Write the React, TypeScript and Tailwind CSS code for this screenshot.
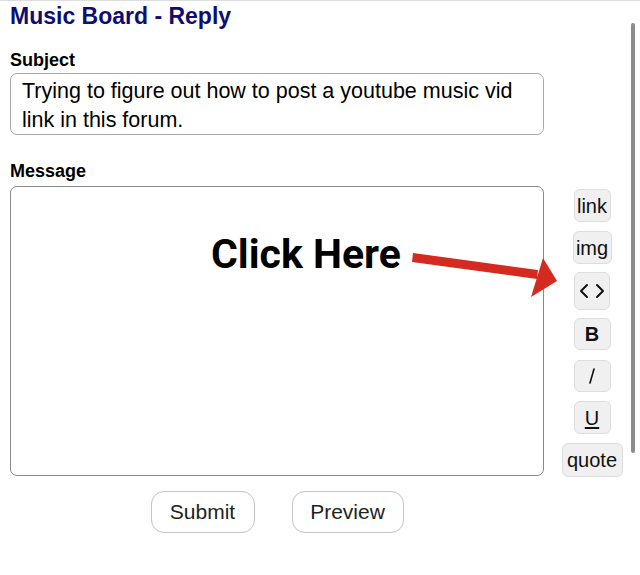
import React from "react";

const sideButtons = [
  { label: "link", className: "mt-0 h-[33px] w-[37px]" },
  { label: "img", className: "mt-[9px] h-[33px] w-[39px]" },
  { label: "<>", className: "mt-[8px] h-[38px] w-[36px] bg-[#e7e7e7]" },
  { label: "B", className: "mt-[8px] h-[32px] w-[37px] font-bold" },
  { label: "I", className: "mt-[10px] h-[32px] w-[37px]" },
  { label: "U", className: "mt-[9px] h-[33px] w-[37px] underline underline-offset-2" },
  { label: "quote", className: "mt-[9px] h-[34px] w-[61px]" },
];

function CodeGlyph() {
  return (
    <svg width="26" height="16" viewBox="0 0 26 16" fill="none" stroke="#111" strokeWidth="2" strokeLinecap="round" strokeLinejoin="round">
      <path d="M8 2 L2 8 L8 14" />
      <path d="M18 2 L24 8 L18 14" />
    </svg>
  );
}

function ItalicGlyph() {
  return (
    <svg width="10" height="18" viewBox="0 0 10 18" fill="none" stroke="#111" strokeWidth="1.6" strokeLinecap="round">
      <path d="M7 2 L3 16" />
    </svg>
  );
}

export default function App() {
  return (
    <div className="relative h-[575px] w-[640px] overflow-hidden border-t border-[#dedede] bg-white font-['Liberation_Sans',Arial,sans-serif] text-black">
      <div className="pl-[10px] pt-[1px]">
        <h1 className="text-[23px] font-bold leading-[28px] text-[#0d0d72]">
          Music Board - Reply
        </h1>

        <label className="mt-[19px] block text-[18px] font-bold leading-[22px]">
          Subject
        </label>
        <textarea
          readOnly
          defaultValue="Trying to figure out how to post a youtube music vid link in this forum."
          className="mt-[2px] block h-[62px] w-[534px] resize-none overflow-hidden rounded-[7px] border border-[#a9a9a9] bg-white pl-[11px] pr-[12px] pt-[3px] text-[21.5px] leading-[29px] text-black outline-none"
        />

        <label className="mt-[25px] block text-[18px] font-bold leading-[22px]">
          Message
        </label>

        <div className="relative mt-[4px] flex">
          <textarea
            readOnly
            className="block h-[290px] w-[534px] shrink-0 resize-none rounded-[7px] border border-[#8a8a8a] bg-white outline-none"
          />
          <div className="flex flex-1 flex-col items-center pt-[3px] text-[20px]">
            {sideButtons.map((b) => (
              <button
                key={b.label}
                type="button"
                className={
                  "flex items-center justify-center rounded-[6px] border border-[#dddddd] bg-[#f0f0f0] leading-none text-[#111] " +
                  b.className
                }
              >
                {b.label === "<>" ? (
                  <CodeGlyph />
                ) : b.label === "I" ? (
                  <ItalicGlyph />
                ) : (
                  b.label
                )}
              </button>
            ))}
          </div>

          <span className="absolute left-[201px] top-[48px] font-['Roboto',sans-serif] text-[41px] font-bold leading-none text-black">
            Click Here
          </span>
          <svg
            className="pointer-events-none absolute left-0 top-0"
            width="630"
            height="300"
            viewBox="0 0 630 300"
          >
            <g transform="translate(-10 -186)">
              <path d="M413 253 L538 270 L537 279 L412 262 Z" fill="#d42a20" />
              <path d="M557 281 L543 258 L531 297 Z" fill="#d42a20" />
            </g>
          </svg>
        </div>

        <div className="flex w-[534px] justify-center gap-[37px] pt-[14px]">
          <button
            type="button"
            className="h-[42px] w-[104px] rounded-[13px] border border-[#c4c4c4] bg-white text-[21px] text-[#222]"
          >
            Submit
          </button>
          <button
            type="button"
            className="h-[42px] w-[112px] rounded-[13px] border border-[#c4c4c4] bg-white text-[21px] text-[#222]"
          >
            Preview
          </button>
        </div>
      </div>

      <div className="absolute right-[5px] top-[22px] h-[430px] w-[4px] rounded-full bg-[#8c8c8c]" />
    </div>
  );
}
